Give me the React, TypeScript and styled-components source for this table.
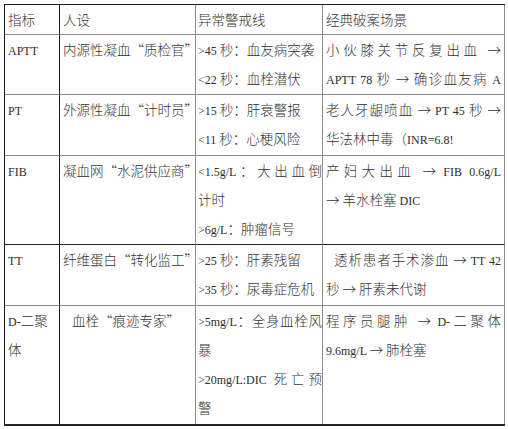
import React from 'react';
import styled, { createGlobalStyle } from 'styled-components';

const GlobalStyle = createGlobalStyle`
  html, body {
    margin: 0;
    padding: 0;
    background: #ffffff;
  }
  body {
    font-family: "Noto Sans CJK SC", sans-serif;
  }
`;

const Page = styled.div`
  box-sizing: border-box;
  width: 508px;
  height: 429px;
  padding: 4px;
  background: #ffffff;
`;

const Table = styled.table`
  border-collapse: separate;
  border-spacing: 0;
  table-layout: fixed;
  width: 501px;
  border-top: 1px solid #1e1e1e;
  border-left: 1px solid #1e1e1e;
  border-bottom: 2px solid #262626;
  color: #333333;
  font-family: "Noto Sans CJK SC", sans-serif;
  font-size: 13.5px;
  font-weight: 300;
  text-autospace: no-autospace;
  text-spacing-trim: space-all;
`;

const Col = styled.col<{ $w: number }>`
  width: ${(p) => p.$w}px;
`;

const Row = styled.tr<{ $h: number }>`
  height: ${(p) => p.$h}px;
`;

const Cell = styled.td<{ $first?: boolean; $last?: boolean; $darkBottom?: boolean; $padL: number; $padR: number }>`
  box-sizing: border-box;
  vertical-align: top;
  padding: 0 ${(p) => p.$padR}px 0 ${(p) => p.$padL}px;
  overflow: visible;
  border-right: 1px solid ${(p) => (p.$first ? '#1e1e1e' : '#8c8c8c')};
  border-bottom: ${(p) => (p.$last ? 'none' : `1px solid ${p.$darkBottom ? '#262626' : '#8c8c8c'}`)};
`;

const Line = styled.div<{ $justify?: boolean; $indent?: number }>`
  line-height: 29px;
  height: 29px;
  white-space: nowrap;
  padding-left: ${(p) => p.$indent ?? 0}px;
  text-align: ${(p) => (p.$justify ? 'justify' : 'left')};
  text-align-last: ${(p) => (p.$justify ? 'justify' : 'left')};
  text-justify: inter-character;
`;

const Latin = styled.span`
  font-family: "Liberation Serif", serif;
  font-size: 12px;
  font-weight: 400;
  color: #2e2e2e;
`;

type LineSpec = { text: string; justify?: boolean; indent?: number };
type RowSpec = { h: number; darkBottom?: boolean; cells: LineSpec[][] };

const rows: RowSpec[] = [
  {
    h: 30,
    cells: [
      [{ text: '指标' }],
      [{ text: '人设' }],
      [{ text: '异常警戒线' }],
      [{ text: '经典破案场景' }],
    ],
  },
  {
    h: 60,
    cells: [
      [{ text: 'APTT' }],
      [{ text: '内源性凝血“质检官”' }],
      [{ text: '>45 秒：血友病突袭' }, { text: '<22 秒：血栓潜伏' }],
      [
        { text: '小伙膝关节反复出血 →', justify: true },
        { text: 'APTT 78 秒 → 确诊血友病 A', justify: true },
      ],
    ],
  },
  {
    h: 61,
    cells: [
      [{ text: 'PT' }],
      [{ text: '外源性凝血“计时员”' }],
      [{ text: '>15 秒：肝衰警报' }, { text: '<11 秒：心梗风险' }],
      [
        { text: '老人牙龈喷血 → PT 45 秒 →', justify: true },
        { text: '华法林中毒（INR=6.8!' },
      ],
    ],
  },
  {
    h: 89,
    darkBottom: true,
    cells: [
      [{ text: 'FIB' }],
      [{ text: '凝血网“水泥供应商”' }],
      [{ text: '<1.5g/L：大出血倒', justify: true }, { text: '计时' }, { text: '>6g/L：肿瘤信号' }],
      [
        { text: '产妇大出血 → FIB 0.6g/L', justify: true },
        { text: '→ 羊水栓塞 DIC' },
      ],
    ],
  },
  {
    h: 61,
    cells: [
      [{ text: 'TT' }],
      [{ text: '纤维蛋白“转化监工”' }],
      [{ text: '>25 秒：肝素残留' }, { text: '>35 秒：尿毒症危机' }],
      [
        { text: '透析患者手术渗血 → TT 42', justify: true, indent: 8 },
        { text: '秒 → 肝素未代谢' },
      ],
    ],
  },
  {
    h: 118,
    cells: [
      [{ text: 'D-二聚' }, { text: '体' }],
      [{ text: '血栓“痕迹专家”', indent: 9 }],
      [
        { text: '>5mg/L：全身血栓风', justify: true },
        { text: '暴' },
        { text: '>20mg/L:DIC 死亡预', justify: true },
        { text: '警' },
      ],
      [
        { text: '程序员腿肿 → D-二聚体', justify: true },
        { text: '9.6mg/L → 肺栓塞' },
      ],
    ],
  },
];

const renderText = (s: string) =>
  s
    .split(/([\x20-\x7E]+)/)
    .filter((part) => part.length > 0)
    .map((part, i) =>
      /^[\x20-\x7E]+$/.test(part) ? (
        <Latin key={i}>{part}</Latin>
      ) : (
        <React.Fragment key={i}>{part}</React.Fragment>
      )
    );

const widths = [55, 136, 127, 182];
const padsL = [3, 3, 2, 3];
const padsR = [2, 1, 0, 3];

export default function App() {
  return (
    <>
      <GlobalStyle />
      <Page>
        <Table>
          <colgroup>
            {widths.map((w, i) => (
              <Col key={i} $w={w} />
            ))}
          </colgroup>
          <tbody>
            {rows.map((row, ri) => (
              <Row key={ri} $h={row.h}>
                {row.cells.map((lines, ci) => (
                  <Cell
                    key={ci}
                    $first={ci === 0}
                    $last={ri === rows.length - 1}
                    $darkBottom={row.darkBottom}
                    $padL={padsL[ci]}
                    $padR={padsR[ci]}
                  >
                    {lines.map((ln, li) => (
                      <Line key={li} $justify={ln.justify} $indent={ln.indent}>
                        {renderText(ln.text)}
                      </Line>
                    ))}
                  </Cell>
                ))}
              </Row>
            ))}
          </tbody>
        </Table>
      </Page>
    </>
  );
}
